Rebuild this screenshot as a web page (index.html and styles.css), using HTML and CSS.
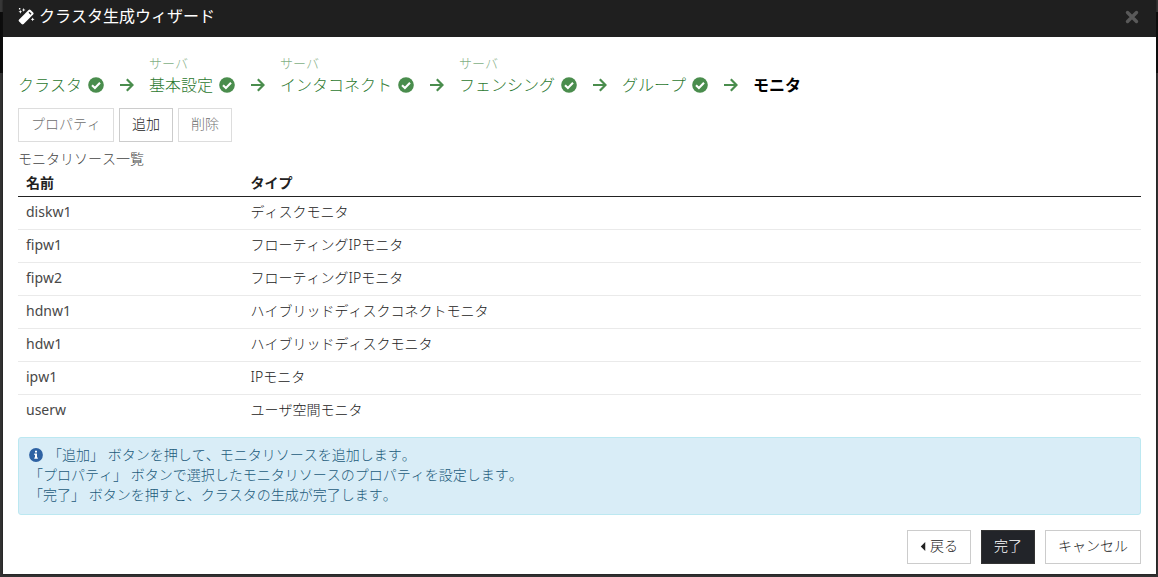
FILE: index.html
```html
<!DOCTYPE html>
<html lang="ja">
<head>
<meta charset="utf-8">
<title>クラスタ生成ウィザード</title>
<link rel="stylesheet" href="styles.css">
</head>
<body>
<svg class="sprite" aria-hidden="true">
  <symbol id="check" viewBox="0 0 16 16"><circle cx="8" cy="8" r="7.8" fill="currentColor"/><path d="M4 8.2 6.9 11 12 5.7" fill="none" stroke="#fff" stroke-width="2.1"/></symbol>
  <symbol id="arrow" viewBox="0 0 14 16"><path d="M0 8h12M6.8 2.2 12.5 8l-5.7 5.8" fill="none" stroke="currentColor" stroke-width="2.2"/></symbol>
</svg>
<main class="modal" role="dialog" aria-labelledby="title">
  <header class="modal-header">
    <svg class="wand" viewBox="0 0 18 18" aria-hidden="true">
      <path d="M1.2 12.2 11.2 2.200a1.600 1.600 0 0 1 2.200 0l2.600 2.600a1.600 1.600 0 0 1 0 2.200L6 17a1.600 1.600 0 0 1-2.200 0l-2.600-2.600a1.600 1.600 0 0 1 0-2.200z" fill="#fff"/>
      <path d="m11.200 5 2.100 2.100 1-1L12.200 4z" fill="#1f1f1f"/>
      <path d="M6 0l.6 1.5L8 2l-1.400.6L6 4l-.6-1.400L4 2l1.400-.5zM2.500 2l.6 1.400 1.400.6-1.400.6-.6 1.400-.6-1.400L.5 4l1.400-.6zM15.500 10l.6 1.400 1.400.6-1.400.6-.6 1.400-.6-1.400-1.400-.6 1.400-.6zM1 0h1.500v1.500H1z" fill="#fff"/>
    </svg>
    <h1 id="title" class="modal-title">クラスタ生成ウィザード</h1>
    <button class="close" type="button" aria-label="閉じる">
      <svg viewBox="0 0 14 14" aria-hidden="true"><path d="m2.500 2.500 9 9m0-9-9 9" fill="none" stroke="currentColor" stroke-width="3.400" stroke-linecap="round"/></svg>
    </button>
  </header>
  <div class="modal-body">
    <ol class="steps">
      <li class="step"><span>クラスタ</span><svg class="check"><use href="#check"/></svg><svg class="arrow"><use href="#arrow"/></svg></li>
      <li class="step"><span><small>サーバ</small>基本設定</span><svg class="check"><use href="#check"/></svg><svg class="arrow"><use href="#arrow"/></svg></li>
      <li class="step"><span><small>サーバ</small>インタコネクト</span><svg class="check"><use href="#check"/></svg><svg class="arrow"><use href="#arrow"/></svg></li>
      <li class="step"><span><small>サーバ</small>フェンシング</span><svg class="check"><use href="#check"/></svg><svg class="arrow"><use href="#arrow"/></svg></li>
      <li class="step"><span>グループ</span><svg class="check"><use href="#check"/></svg><svg class="arrow"><use href="#arrow"/></svg></li>
      <li class="step current" aria-current="step"><span>モニタ</span></li>
    </ol>
    <div class="toolbar">
      <button class="btn" type="button" disabled>プロパティ</button>
      <button class="btn" type="button">追加</button>
      <button class="btn" type="button" disabled>削除</button>
    </div>
    <table class="monitors">
      <caption>モニタリソース一覧</caption>
      <thead><tr><th class="name" scope="col">名前</th><th scope="col">タイプ</th></tr></thead>
      <tbody>
        <tr><td>diskw1</td><td>ディスクモニタ</td></tr>
        <tr><td>fipw1</td><td>フローティングIPモニタ</td></tr>
        <tr><td>fipw2</td><td>フローティングIPモニタ</td></tr>
        <tr><td>hdnw1</td><td>ハイブリッドディスクコネクトモニタ</td></tr>
        <tr><td>hdw1</td><td>ハイブリッドディスクモニタ</td></tr>
        <tr><td>ipw1</td><td>IPモニタ</td></tr>
        <tr><td>userw</td><td>ユーザ空間モニタ</td></tr>
      </tbody>
    </table>
    <div class="alert">
      <svg class="info" viewBox="0 0 14 14" aria-hidden="true"><circle cx="7" cy="7" r="6.900" fill="#2e62a3"/><path d="M6 2.700h2v1.800H6zM5.300 5.600H8v3.800h.8v1.400H5.300V9.400H6V7h-.7z" fill="#fff"/></svg>「追加」 ボタンを押して、モニタリソースを追加します。<br>
      「プロパティ」 ボタンで選択したモニタリソースのプロパティを設定します。<br>
      「完了」 ボタンを押すと、クラスタの生成が完了します。
    </div>
    <footer class="actions">
      <button class="btn" type="button"><svg class="caret" viewBox="0 0 5 10" aria-hidden="true"><path d="M5 0v10L0 5z" fill="currentColor"/></svg>戻る</button>
      <button class="btn primary" type="button">完了</button>
      <button class="btn" type="button">キャンセル</button>
    </footer>
  </div>
</main>
</body>
</html>
```
FILE: styles.css
```css
* {
  box-sizing: border-box;
}

body {
  margin: 0;
  padding: 0 2px 3px 3px;
  background: linear-gradient(#383838 12px, #0c0c0c 12px, #0c0c0c 73px, #333 73px);
  color: #222;
  font: 300 14px/20px "Noto Sans", "Noto Sans CJK JP", sans-serif;
  font-kerning: none;
}

.sprite {
  position: absolute;
  width: 0;
  height: 0;
}

.modal {
  background: #fff;
  box-shadow: 0 0 2px #111;
}

.modal-header {
  display: flex;
  align-items: center;
  height: 37px;
  padding: 0 17px 4px 15px;
  background: #1f1f1f;
  color: #fff;
}

.wand {
  width: 17px;
  height: 17px;
  margin-right: 4px;
}

.modal-title {
  flex: 1;
  margin: 0 0 1px;
  font-size: 16px;
  font-weight: 400;
  line-height: 24px;
}

.close {
  display: flex;
  padding: 0;
  border: 0;
  background: none;
  color: #595959;
}

.close svg {
  width: 14px;
  height: 14px;
}

.modal-body {
  padding: 15px 15px 10px;
}

.steps {
  display: flex;
  align-items: flex-end;
  margin: 0 0 12px;
  padding: 0;
  list-style: none;
  color: #2c782f;
  font-size: 16px;
  line-height: 22px;
}

.step {
  display: flex;
  align-items: flex-end;
}

.step small {
  display: block;
  font-size: 13px;
  opacity: 0.6;
}

.check,
.arrow {
  color: #4a8d4d;
}

.check {
  width: 16px;
  height: 16px;
  margin: 0 16px 3px 6px;
}

.arrow {
  width: 14px;
  height: 16px;
  margin: 0 15px 3px 0;
}

.current {
  color: #000;
  font-weight: 700;
}

.toolbar {
  display: flex;
  gap: 5px;
}

.btn {
  height: 34px;
  padding: 4px 12px 6px;
  border: 1px solid #ccc;
  background: #fff;
  color: #222;
  font: inherit;
  font-kerning: none;
}

.btn:disabled {
  opacity: 0.65;
}

.primary {
  background: #222429;
  border-color: #333;
  color: #fff;
}

.caret {
  width: 6px;
  height: 9px;
  margin-right: 4px;
}

.monitors {
  width: 100%;
  margin-top: 7px;
  border-collapse: collapse;
  table-layout: fixed;
}

.monitors caption {
  color: #444;
  text-align: left;
}

.monitors th,
.monitors td {
  padding: 5px 8px 7px;
  text-align: left;
}

.monitors th {
  padding: 4px 8px 3px;
  border-bottom: 1px solid #222;
  font-weight: 700;
}

.monitors td {
  border-bottom: 1px solid #eaeaea;
}

.monitors td:first-child {
  color: #484848;
  font-weight: 400;
}

.monitors tr:last-child td {
  border-bottom: 0;
}

.monitors .name {
  width: 20%;
}

.alert {
  margin: 10px 0 15px;
  padding: 7px 10px 9px;
  border: 1px solid #bce8f1;
  border-radius: 3px;
  background: #d9edf7;
  color: #1c5b7b;
}

.info {
  width: 14px;
  height: 14px;
  margin-right: 5px;
  vertical-align: -2px;
}

.actions {
  display: flex;
  justify-content: flex-end;
  gap: 10px;
}
```
